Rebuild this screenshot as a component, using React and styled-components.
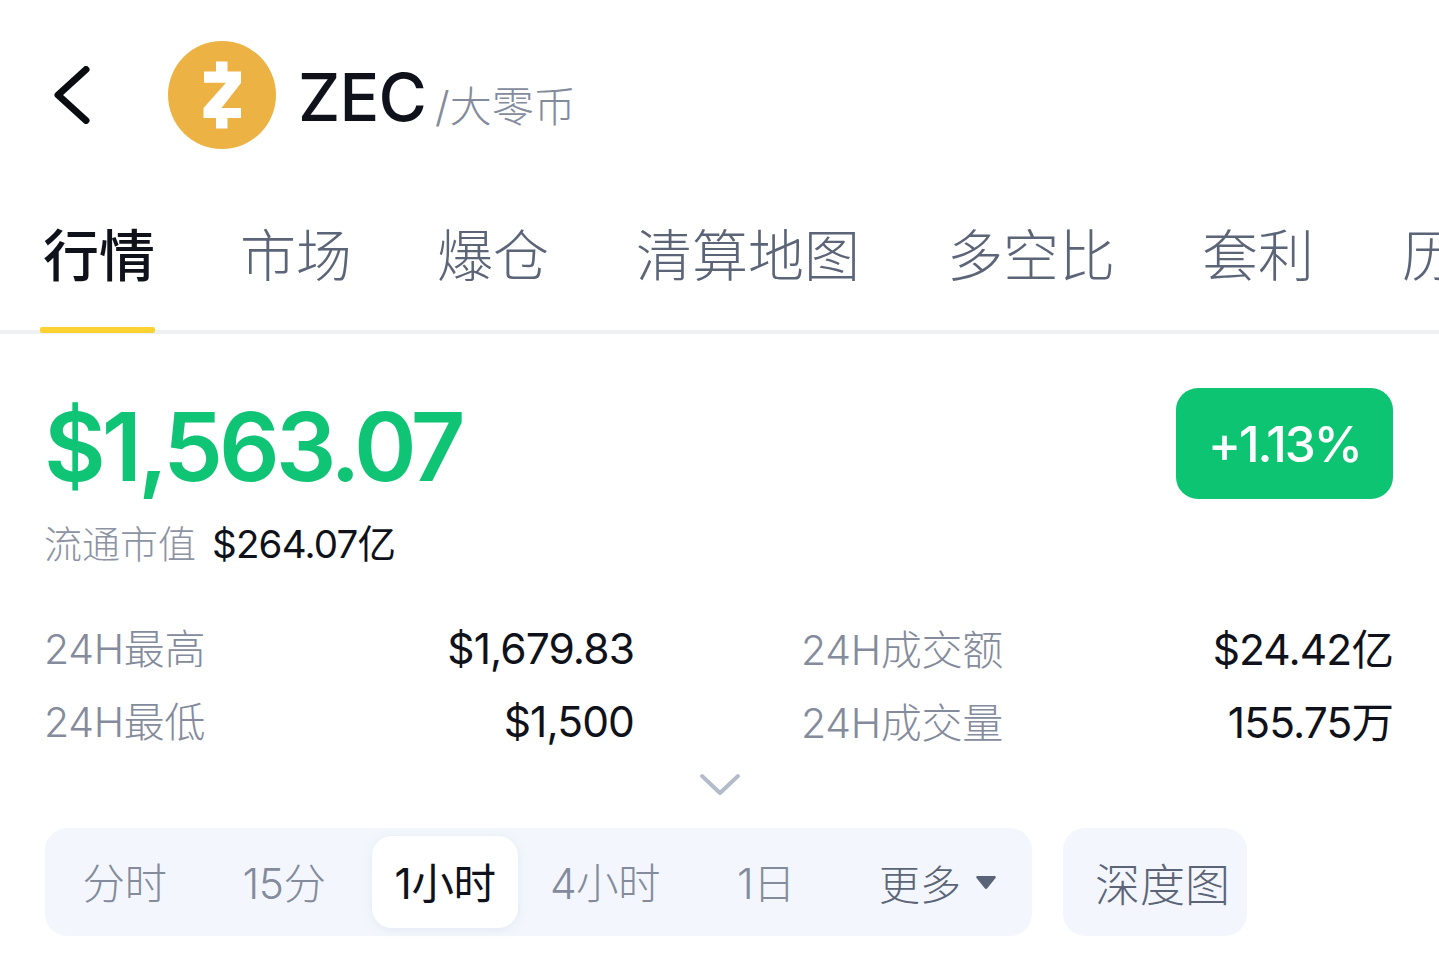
import styled, { createGlobalStyle } from 'styled-components';

const Global = createGlobalStyle`
    html, body {
        margin: 0;
        padding: 0;
        background: #FFFFFF;
        overflow: hidden;
    }
    body {
        font-family: Inter, "Noto Sans CJK SC", sans-serif;
    }
`;

const tabs = [
    { label: '行情', width: 197 },
    { label: '市场', width: 197 },
    { label: '爆仓', width: 199 },
    { label: '清算地图', width: 311 },
    { label: '多空比', width: 255 },
    { label: '套利', width: 200 },
    { label: '历史', width: 112 },
];
const periods = [
    { label: '分时', width: 159 },
    { label: '15分', width: 168, nudge: 8 },
    { label: '1小时', width: 146, active: true },
    { label: '4小时', width: 176, nudge: 2 },
    { label: '1日', width: 144 },
];

export default function App() {
    return (
        <Page>
            <Global />
            <Header>
                <Back viewBox="0 0 36 58" fill="none">
                    <path d="M32 3.5 L4 29 L32 54.5" stroke="#0A0C12" strokeWidth="7" strokeLinecap="round" strokeLinejoin="round" />
                </Back>
                <Logo viewBox="0 0 108 108">
                    <circle cx="54" cy="54" r="54" fill="#ECB244" />
                    <path fill="#FFFFFF" d="M48 20.5 H59.5 V30.5 H73 V42 L53.5 67 H73 V77 H59.5 V87.5 H48 V77 H35.5 V67 L58 41.7 H36 V30.5 H48 Z" />
                </Logo>
                <Symbol>ZEC</Symbol>
                <CoinName>/大零币</CoinName>
            </Header>

            <TabBar>
                {tabs.map((tab, i) => (
                    <Tab key={tab.label} $active={i === 0} $width={tab.width}>{tab.label}</Tab>
                ))}
            </TabBar>

            <Content>
                <PriceRow>
                    <Price>$1,563.07</Price>
                    <Badge>+1.13%</Badge>
                </PriceRow>
                <CapRow>
                    <CapLabel>流通市值</CapLabel>
                    <CapValue>$264.07亿</CapValue>
                </CapRow>
                <StatGrid>
                    <Stat><StatLabel>24H最高</StatLabel><StatValue>$1,679.83</StatValue></Stat>
                    <Stat><StatLabel>24H成交额</StatLabel><StatValue>$24.42亿</StatValue></Stat>
                    <Stat><StatLabel>24H最低</StatLabel><StatValue>$1,500</StatValue></Stat>
                    <Stat><StatLabel>24H成交量</StatLabel><StatValue>155.75万</StatValue></Stat>
                </StatGrid>
                <Expand>
                    <svg width="42" height="24" viewBox="0 0 42 24" fill="none">
                        <path d="M3 3 L21 20 L39 3" stroke="#B4BCCB" strokeWidth="4" strokeLinecap="round" strokeLinejoin="round" />
                    </svg>
                </Expand>
                <Controls>
                    <Periods>
                        {periods.map(p => (
                            <Period key={p.label} $active={p.active} $width={p.width} $nudge={p.nudge}>{p.label}</Period>
                        ))}
                        <More>
                            更多
                            <svg width="22" height="15" viewBox="0 0 22 15">
                                <path d="M2.5 1 H19.5 Q21.5 1 20.5 3 L12.5 13 Q11 14.8 9.5 13 L1.5 3 Q0.5 1 2.5 1 Z" fill="#5A6478" />
                            </svg>
                        </More>
                    </Periods>
                    <Depth>深度图</Depth>
                </Controls>
            </Content>
        </Page>
    );
}

const Page = styled.div`
    width: 1439px;
    height: 969px;
    overflow: hidden;
    background: #FFFFFF;
    box-sizing: border-box;
    padding-top: 41px;
`;

const Header = styled.div`
    display: flex;
    align-items: center;
    height: 108px;
    padding-left: 54px;
`;

const Back = styled.svg`
    width: 36px;
    height: 58px;
    margin-right: 78px;
`;

const Logo = styled.svg`
    width: 108px;
    height: 108px;
    margin-right: 22px;
`;

const Symbol = styled.span`
    font-size: 66px;
    font-weight: 500;
    color: #0F121A;
    letter-spacing: -0.8px;
    line-height: 108px;
    margin-top: 4px;
`;

const CoinName = styled.span`
    font-size: 42px;
    font-weight: 300;
    color: #848B9C;
    margin-left: 9px;
    margin-top: 24px;
    line-height: 60px;
`;

const TabBar = styled.div`
    display: flex;
    height: 140px;
    margin-top: 41px;
    padding-left: 43px;
    border-bottom: 4px solid #EFF0F2;
    white-space: nowrap;
`;

const Tab = styled.div`
    position: relative;
    flex: none;
    width: ${p => p.$width}px;
    font-size: 56px;
    line-height: 133px;
    height: 140px;
    font-weight: ${p => (p.$active ? 500 : 300)};
    color: ${p => (p.$active ? '#0F121A' : '#5C6578')};

    &::after {
        content: '';
        display: ${p => (p.$active ? 'block' : 'none')};
        position: absolute;
        left: -3px;
        width: 115px;
        bottom: -3px;
        height: 6px;
        border-radius: 2px;
        background: #FBD232;
    }
`;

const Content = styled.div`
    padding: 54px 46px 0 46px;
`;

const PriceRow = styled.div`
    display: flex;
    align-items: center;
    justify-content: space-between;
    height: 111px;
`;

const Price = styled.div`
    font-size: 95px;
    font-weight: 600;
    color: #0FC474;
    letter-spacing: -4px;
    line-height: 111px;
    margin-top: 5px;
    margin-left: -2px;
`;

const Badge = styled.div`
    width: 217px;
    height: 111px;
    border-radius: 22px;
    background: #0DC473;
    color: #FFFFFF;
    font-size: 49.5px;
    font-weight: 500;
    letter-spacing: -2px;
    box-sizing: border-box;
    display: flex;
    align-items: center;
    justify-content: center;
`;

const CapRow = styled.div`
    display: flex;
    align-items: baseline;
    margin-top: 14px;
    height: 50px;
`;

const CapLabel = styled.span`
    width: 168px;
    font-size: 38px;
    font-weight: 300;
    color: #8C93A3;
    margin-left: -2px;
    white-space: nowrap;
`;

const CapValue = styled.span`
    font-size: 38.5px;
    color: #0F121A;
    letter-spacing: -0.8px;
`;

const StatGrid = styled.div`
    display: grid;
    grid-template-columns: 590px 592px;
    justify-content: space-between;
    row-gap: 25px;
    margin-top: 53px;
    margin-left: -2px;
`;

const Stat = styled.div`
    display: flex;
    justify-content: space-between;
    align-items: baseline;
    height: 48px;
`;

const StatLabel = styled.span`
    font-size: 41px;
    font-weight: 300;
    color: #848B9C;
    letter-spacing: -0.3px;
`;

const StatValue = styled.span`
    font-size: 42.5px;
    color: #0F121A;
    letter-spacing: -0.9px;
`;

const Expand = styled.div`
    display: flex;
    justify-content: center;
    height: 24px;
    margin-top: 36px;
    margin-left: -46px;
    margin-right: -46px;
`;

const Controls = styled.div`
    display: flex;
    gap: 31px;
    margin-top: 31px;
    margin-left: -1px;
`;

const Periods = styled.div`
    display: flex;
    align-items: center;
    width: 987px;
    height: 108px;
    border-radius: 22px;
    background: #F3F7FD;
`;

const Period = styled.div`
    width: ${p => p.$width}px;
    height: 92px;
    box-sizing: border-box;
    padding-right: ${p => p.$nudge || 0}px;
    padding-bottom: 4px;
    border-radius: 20px;
    display: flex;
    align-items: center;
    justify-content: center;
    font-size: 42.5px;
    letter-spacing: -0.5px;
    font-weight: ${p => (p.$active ? 400 : 300)};
    color: ${p => (p.$active ? '#0F121A' : '#848B9C')};
    background: ${p => (p.$active ? '#FFFFFF' : 'transparent')};
    box-shadow: ${p => (p.$active ? '0 2px 12px rgba(120, 135, 165, 0.12)' : 'none')};
`;

const More = styled.div`
    display: flex;
    align-items: center;
    gap: 14px;
    font-size: 41px;
    font-weight: 300;
    color: #5C6578;
    margin-left: 41px;
`;

const Depth = styled.div`
    width: 184px;
    height: 108px;
    border-radius: 22px;
    background: #F3F7FD;
    box-sizing: border-box;
    padding: 0 0 0 32px;
    display: flex;
    align-items: center;
    font-size: 45px;
    font-weight: 300;
    color: #5C6578;
`;
